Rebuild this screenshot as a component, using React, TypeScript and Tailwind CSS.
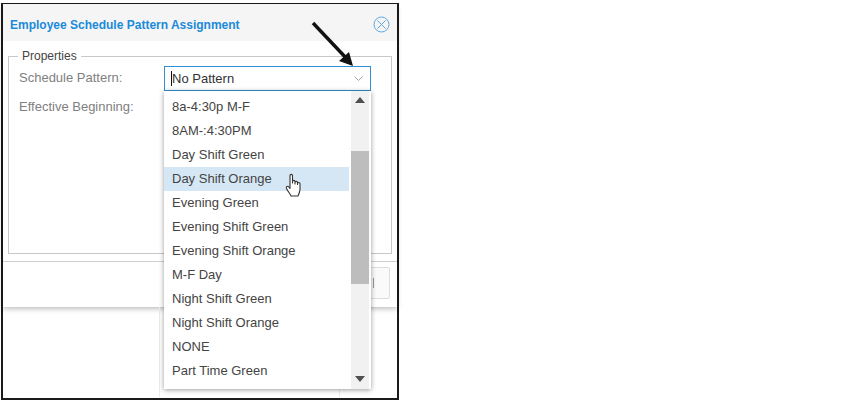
const patterns = [
  '8a-4:30p M-F',
  '8AM-:4:30PM',
  'Day Shift Green',
  'Day Shift Orange',
  'Evening Green',
  'Evening Shift Green',
  'Evening Shift Orange',
  'M-F Day',
  'Night Shift Green',
  'Night Shift Orange',
  'NONE',
  'Part Time Green',
]

function Triangle({ down }: { down?: boolean }) {
  return (
    <svg width="10" height="6" viewBox="0 0 10 6" className="mx-auto">
      <path d={down ? 'M0 0 H10 L5 6 Z' : 'M0 6 H10 L5 0 Z'} fill="#505050" />
    </svg>
  )
}

function HandCursor() {
  return (
    <svg width="18" height="25" viewBox="0 0 18 25" className="absolute left-[285px] top-[173px]">
      <path
        d="M5 2.5 C5 1 7.5 1 7.5 2.5 V10 V8.5 C7.5 7 10 7 10 8.5 V11 V9.5 C10 8 12.5 8 12.5 9.5 V11.5 V10.5 C12.5 9.2 15 9.2 15 10.5 V16 C15 19 14 20.5 13 23 H6 C5 20.5 3 18.5 1.5 15.5 C0.7 13.8 2.6 12.5 3.8 14 L5 15.5 Z"
        fill="#ffffff"
        stroke="#333333"
        strokeWidth="1.1"
        strokeLinejoin="round"
      />
    </svg>
  )
}

export default function App() {
  return (
    <div className="relative w-[866px] h-[402px] bg-white font-['Liberation_Sans',Arial,sans-serif] overflow-hidden">
      {/* Dialog frame */}
      <div className="absolute left-[1px] top-[3px] w-[398px] h-[397px] border-2 border-t border-[#1a1a1a] bg-white pt-[1px]">
        <div className="h-[302px] flex flex-col shadow-[0_2px_5px_rgba(0,0,0,0.25)]">
          <div className="h-[36px] bg-[#f5f5f5] flex items-center justify-between pl-[7px] pr-[7px] pt-[3px]">
            <span className="text-[12px] font-bold text-[#1a8ada]">
              Employee Schedule Pattern Assignment
            </span>
            <svg width="17" height="17" viewBox="0 0 17 17" fill="none" stroke="#5fa6e0" strokeWidth="1">
              <circle cx="8.5" cy="8.5" r="7.5" />
              <path d="M4.5 4.5 L12.5 12.5 M12.5 4.5 L4.5 12.5" />
            </svg>
          </div>
          <div className="px-[5px] pt-[8px] flex-1 flex flex-col">
            <fieldset className="h-[205px] border border-[#c8c8c8] pl-[10px]">
              <legend className="-ml-[1px] px-[4px] text-[12px] leading-[14px] text-[#444444]">Properties</legend>
              <div className="mt-[7px] flex flex-col gap-[13px] text-[13px] leading-[16px] text-[#808080]">
                <span>Schedule Pattern:</span>
                <span>Effective Beginning:</span>
              </div>
            </fieldset>
          </div>
          <div className="h-[46px] border-t border-[#cfcfcf] flex justify-end pr-[7px] pt-[5px]">
            <div className="w-[40px] h-[32px] border border-[#dddddd] rounded-[2px] bg-[#fafafa] flex items-center pl-[22px]">
              <div className="w-[1px] h-[10px] bg-[#999999]" />
            </div>
          </div>
        </div>
        <div className="flex h-[90px]">
          <div className="w-[157px] border-r border-[#ececec]" />
          <div className="w-[180px] border-r border-[#ececec]" />
        </div>
      </div>

      {/* Select input */}
      <div className="absolute left-[164px] top-[66px] w-[207px] h-[25px] border border-[#2f8fd4] bg-white flex items-center justify-between pl-[6px] pr-[7px]">
        <span className="text-[13px] text-[#333333] border-l border-[#111111] leading-[15px]">No Pattern</span>
        <svg width="9" height="5" viewBox="0 0 9 5" fill="none" stroke="#a8a8a8" strokeWidth="1">
          <path d="M0.5 0.5 L4.5 4.5 L8.5 0.5" />
        </svg>
      </div>

      {/* Dropdown list */}
      <div className="absolute left-[164px] top-[91px] w-[207px] h-[298px] bg-white shadow-[0_1px_5px_rgba(0,0,0,0.4)] flex">
        <ul className="w-[185px] pt-[4px]">
          {patterns.map((p) => (
            <li
              key={p}
              className={`h-[24px] pl-[8px] flex items-center text-[13px] text-[#444444] ${
                p === 'Day Shift Orange' ? 'bg-[#d5e7f4]' : ''
              }`}
            >
              {p}
            </li>
          ))}
        </ul>
        <div className="ml-[2px] w-[18px] bg-[#f1f1f1] flex flex-col">
          <div className="h-[60px] pt-[6px]">
            <Triangle />
          </div>
          <div className="h-[133px] bg-[#bdbdbd]" />
          <div className="flex-1 flex flex-col justify-end pb-[7px]">
            <Triangle down />
          </div>
        </div>
      </div>

      {/* Callout arrow */}
      <svg width="60" height="50" viewBox="0 0 60 50" className="absolute left-[308px] top-[20px]">
        <path d="M5 3 L40 40" stroke="#111111" strokeWidth="3.4" />
        <path d="M45 46 L31 41 L41 32 Z" fill="#111111" />
      </svg>

      <HandCursor />
    </div>
  )
}
